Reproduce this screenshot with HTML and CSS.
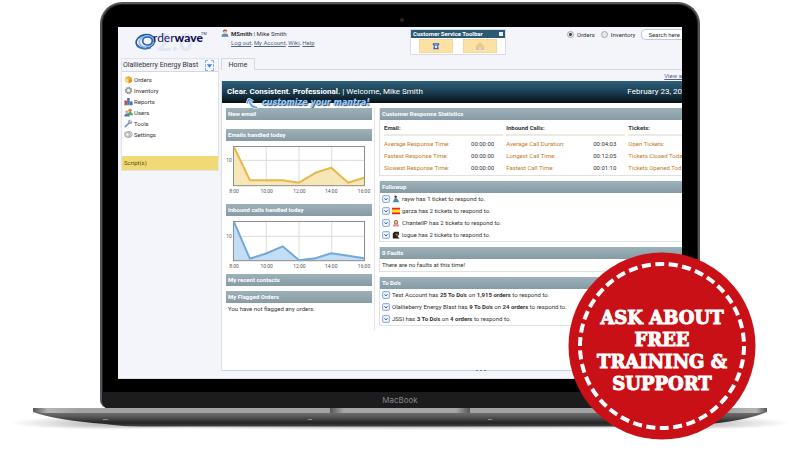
FILE: index.html
```html
<!DOCTYPE html>
<html lang="en">
<head>
<meta charset="utf-8">
<title>Orderwave</title>
<meta name="viewport" content="width=device-width, initial-scale=1">
<link rel="stylesheet" href="styles.css">
</head>
<body>
<svg class="defs" width="0" height="0" aria-hidden="true">
  <symbol id="expand" viewBox="0 0 8 8"><rect x=".7" y=".7" width="6.6" height="6.6" rx=".6" fill="#f4f8ff" stroke="#6f96de" stroke-width=".9"/><path d="M2.4 3.200 L4 5 L5.600 3.200" fill="none" stroke="#3461bd"/></symbol>
  <symbol id="person" viewBox="0 0 10 10"><path d="M1 9.5 Q1 5.8 5 5.8 T9 9.5Z" fill="#4d93cf" stroke="#2e6595" stroke-width=".5"/><circle cx="5" cy="3.6" r="2.5" fill="#f6c48c"/><path d="M2.3 3.8 Q2 .6 5 .6 T7.7 3.8 Q6.5 2 5 2.3 T2.3 3.8Z" fill="#8b4b17"/></symbol>
</svg>
<main class="stage">
  <div class="lid">
    <span class="camera"></span>
    <div class="screen">
      <header class="top">
        <svg class="logo" viewBox="0 0 82 30" role="img" aria-label="Orderwave 2.0">
          <text x="23" y="22" class="logo-version">2.0</text>
          <g fill="none">
            <ellipse cx="11.500" cy="12.500" rx="9.500" ry="6.800" stroke="#2553a0" stroke-width="1.600" transform="rotate(-12 11.500 12.500)"/>
            <ellipse cx="12.500" cy="12.500" rx="7.300" ry="5.400" stroke="#8fb8e4" stroke-width="1.600" transform="rotate(-12 12.500 12.500)"/>
            <ellipse cx="13.500" cy="12" rx="4.800" ry="4" stroke="#2b62b5" stroke-width="1.700"/>
            <path d="M3 15.500 Q8 22 17 18.500" stroke="#3a78c6" stroke-width="1.500"/>
          </g>
          <text x="19" y="13" class="logo-name">rder<tspan class="logo-bold">wave</tspan></text>
          <text x="67" y="6" class="logo-tm">TM</text>
        </svg>
        <div class="user">
          <svg class="icon" aria-hidden="true"><use href="#person"/></svg>
          <div>
            <p><b>MSmith</b> | Mike Smith</p>
            <p class="links"><a href="#">Log out</a>, <a href="#">My Account</a>, <a href="#">Wiki</a>, <a href="#">Help</a></p>
          </div>
        </div>
        <section class="toolbar">
          <h2>Customer Service Toolbar <button class="close" aria-label="Close"></button></h2>
          <div class="tools">
            <button aria-label="Phone"><svg viewBox="0 0 10 10"><path d="M1 1.500 H9 V4 H7.500 L8.500 9 H1.500 L2.500 4 H1Z" fill="#2c62bd"/><path d="M3 2.500 H7 V3.500 H3Z" fill="#9cc2f4"/><circle cx="5" cy="6" r="1.700" fill="#e8f1ff"/></svg></button>
            <button aria-label="Mail"><svg viewBox="0 0 10 10"><path d="M1 4.500 L5 1 L9 4.500 V9 H1Z" fill="#dcd8ca" stroke="#9d9888" stroke-width=".6"/><path d="M2 4.500 L3.500 1.500 H6.500 L8 4.500 L5 6.500Z" fill="#f7cf5c"/><path d="M1 9 L5 5.800 L9 9" fill="#e4e0d4" stroke="#a9a494" stroke-width=".5"/></svg></button>
          </div>
        </section>
        <form class="search">
          <label><input type="radio" name="kind" checked> Orders</label>
          <label><input type="radio" name="kind"> Inventory</label>
          <input class="query" type="text" value="Search here" aria-label="Search">
        </form>
      </header>
      <div class="body">
        <nav class="side">
          <div class="account"><span>Olallieberry Energy Blast</span><button aria-label="Choose account"><svg viewBox="0 0 8 8"><path d="M1 2.500 H7 L4 6.500Z" fill="#3f80d4"/></svg></button></div>
          <ul>
            <li><svg viewBox="0 0 10 10"><path d="M1 3 L5 1 L9 3 V7 L5 9.500 L1 7Z" fill="#f0b038"/><path d="M1 3 L5 5 V9.500 L1 7Z" fill="#fbd784"/><circle cx="7" cy="6.800" r="2" fill="#e0902a"/></svg><a href="#">Orders</a></li>
            <li><svg viewBox="0 0 10 10"><circle cx="5" cy="5" r="3.400" fill="#d5d7da" stroke="#8e9297" stroke-width="1.600" stroke-dasharray="1.600 1"/><circle cx="5" cy="5" r="2.700" fill="none" stroke="#8e9297"/><circle cx="5" cy="5" r="1" fill="#fff"/></svg><a href="#">Inventory</a></li>
            <li><svg viewBox="0 0 10 10"><path d="M.5 4 H3.300 V9 H.5Z" fill="#d1433c"/><path d="M3.500 1 H6.300 V9 H3.500Z" fill="#3c76cf"/><path d="M6.500 5 H9.500 V9 H6.500Z" fill="#4a68b5"/><path d="M0 9 H10" stroke="#8aa" stroke-width=".7"/></svg><a href="#">Reports</a></li>
            <li><svg viewBox="0 0 10 10"><circle cx="6.800" cy="2.600" r="1.900" fill="#c98545"/><path d="M4 8 Q4 4.500 7 4.500 T9.800 8Z" fill="#5ca657"/><circle cx="3.300" cy="4.300" r="1.800" fill="#e8a95c"/><path d="M.3 9.500 Q.3 6 3.300 6 T6.300 9.500Z" fill="#3b7fd0"/></svg><a href="#">Users</a></li>
            <li><svg viewBox="0 0 10 10"><path d="M1.500 8.500 L6 4" stroke="#6a9bd3" stroke-width="2" stroke-linecap="round"/><path d="M8.800 2.500 L7.200 3.500 L6.300 2.700 L7.200 1 Q4.500 .8 4.700 3.500 L6.500 5.300 Q9.300 5.300 8.800 2.500Z" fill="#a4b2c2" stroke="#74869a" stroke-width=".5"/></svg><a href="#">Tools</a></li>
            <li><svg viewBox="0 0 10 10"><circle cx="6" cy="5" r="3.200" fill="#e6e7e9" stroke="#a8abb0"/><circle cx="3.800" cy="5" r="3.100" fill="#d0d3d6" stroke="#999da2"/><circle cx="3.800" cy="5" r="1" fill="#fff"/></svg><a href="#">Settings</a></li>
          </ul>
          <a class="scripts" href="#">Script(s)</a>
        </nav>
        <div class="main">
          <div class="tabs"><button>Home</button></div>
          <a class="view" href="#">View a</a>
          <div class="page">
            <div class="banner">
              <p><b>Clear. Consistent. Professional.</b> | Welcome, Mike Smith</p>
              <time>February 23, 20</time>
              <span class="hint"><svg viewBox="0 0 12 11" aria-hidden="true"><path d="M11 9.500 Q5 9 3.500 4 M.8 5.500 L3 1.200 L7 3.800" fill="none" stroke="#d8ecff" stroke-width="3"/><path d="M11 9.500 Q5 9 3.500 4 M.8 5.500 L3 1.200 L7 3.800" fill="none" stroke="#4c97d9" stroke-width="1.300"/></svg>customize your mantra!</span>
            </div>
            <div class="columns">
              <div class="left">
                <section class="card"><h3>New email</h3></section>
                <section class="card charted"><h3>Emails handled today</h3>
                  <svg class="chart" viewBox="0 0 147 56" role="img" aria-label="Emails handled today">
                    <path class="grid" d="M8 19.500 H139 M40.500 5 V45 M73.500 5 V45 M106.500 5 V45"/>
                    <path d="M8 6 L24 39.500 H57 L73.500 42 L90 32 L106 27 L123 42 L139 37 V45 H8Z" fill="#f6e3b0" fill-opacity=".9"/>
                    <rect class="frame" x="7.500" y="5.500" width="132" height="39.500"/>
                    <path class="line mail" d="M8 6 L24 39.500 H57 L73.500 42 L90 32 L106 27 L123 42 L139 37"/>
                    <text x="3" y="21">10</text>
                    <text x="8" y="52">8:00</text><text x="41" y="52">10:00</text><text x="74" y="52">12:00</text><text x="106" y="52">14:00</text><text x="139" y="52">16:00</text>
                  </svg>
                </section>
                <section class="card"><h3>Inbound calls handled today</h3>
                  <svg class="chart" viewBox="0 0 147 56" role="img" aria-label="Inbound calls handled today">
                    <path class="grid" d="M8 20.500 H139 M40.500 5 V45 M73.500 5 V45 M106.500 5 V45"/>
                    <path d="M8 6 L24 43 L41 37.500 L57 30.500 L73.500 44.500 L90 42.500 L106 37.500 L123 40 L139 42.500 V45 H8Z" fill="#bddaf3" fill-opacity=".9"/>
                    <rect class="frame" x="7.500" y="5.500" width="132" height="39.500"/>
                    <path class="line calls" d="M8 6 L24 43 L41 37.500 L57 30.500 L73.500 44.500 L90 42.500 L106 37.500 L123 40 L139 42.500"/>
                    <text x="3" y="22">10</text>
                    <text x="8" y="52">8:00</text><text x="41" y="52">10:00</text><text x="74" y="52">12:00</text><text x="106" y="52">14:00</text><text x="139" y="52">16:00</text>
                  </svg>
                </section>
                <section class="card"><h3>My recent contacts</h3></section>
                <section class="card"><h3>My Flagged Orders</h3><p>You have not flagged any orders.</p></section>
              </div>
              <div class="right">
                <section class="panel"><h3>Customer Response Statistics</h3>
                  <div class="stats">
                    <table><thead><tr><th colspan="2">Email:</th></tr></thead><tbody><tr><td>Average Response Time:</td><td>00:00:00</td></tr><tr><td>Fastest Response Time:</td><td>00:00:00</td></tr><tr><td>Slowest Response Time:</td><td>00:00:00</td></tr></tbody></table>
                    <table><thead><tr><th colspan="2">Inbound Calls:</th></tr></thead><tbody><tr><td>Average Call Duration:</td><td>00:04:03</td></tr><tr><td>Longest Call Time:</td><td>00:12:05</td></tr><tr><td>Fastest Call Time:</td><td>00:01:10</td></tr></tbody></table>
                    <table><thead><tr><th>Tickets:</th></tr></thead><tbody><tr><td>Open Tickets:</td></tr><tr><td>Tickets Closed Toda</td></tr><tr><td>Tickets Opened Tod</td></tr></tbody></table>
                  </div>
                </section>
                <section class="panel"><h3>Followup</h3>
                  <ul class="rows">
                    <li><svg><use href="#expand"/></svg><svg viewBox="0 0 10 10"><path d="M0 9 Q5 6 10 9Z" fill="#4285c9"/><path d="M1 8.500 L4.500 2 L9 8Z" fill="#4f86bd"/><circle cx="4.500" cy="2" r="1.500" fill="#4a3b3a"/></svg><span>rayw has 1 ticket to respond to.</span></li>
                    <li><svg><use href="#expand"/></svg><svg viewBox="0 0 10 10"><path d="M0 1 H10 V9 H0Z" fill="#e3222b"/><path d="M0 3 H10 V7 H0Z" fill="#ffe21e"/></svg><span>garza has 2 tickets to respond to.</span></li>
                    <li><svg><use href="#expand"/></svg><svg viewBox="0 0 10 10"><path d="M2.500 6 V3 Q5 -1 7.500 3 V6Z" fill="#84402a"/><circle cx="5" cy="3.800" r="1.900" fill="#f1bf95"/><path d="M1 9.500 Q1 6 5 6 T9 9.500Z" fill="#e99096"/></svg><span>ChantellP has 2 tickets to respond to.</span></li>
                    <li><svg><use href="#expand"/></svg><svg viewBox="0 0 10 10"><path d="M1 9.500 V3 L3 1 H8.500 L9 4 L7 7 L9.500 9.500Z" fill="#24211f"/><path d="M4 3.500 H8 L7 5.500 H5Z" fill="#a5774c"/></svg><span>logue has 2 tickets to respond to.</span></li>
                  </ul>
                </section>
                <section class="panel"><h3>0 Faults</h3><p>There are no faults at this time!</p></section>
                <section class="panel"><h3>To Do's</h3>
                  <ul class="rows">
                    <li><svg><use href="#expand"/></svg><span>Test Account has <b>25 To Do's</b> on <b>1,915 orders</b> to respond to.</span></li>
                    <li><svg><use href="#expand"/></svg><span>Olallieberry Energy Blast has <b>9 To Do's</b> on <b>24 orders</b> to respond to.</span></li>
                    <li><svg><use href="#expand"/></svg><span>JSSI has <b>3 To Do's</b> on <b>4 orders</b> to respond to.</span></li>
                  </ul>
                </section>
              </div>
            </div>
          </div>
          <div class="grip"><i></i><i></i><i></i></div>
        </div>
      </div>
    </div>
    <div class="chin">MacBook</div>
  </div>
  <svg class="base" viewBox="0 0 800 32" aria-hidden="true">
    <defs>
      <linearGradient id="deck" x1="0" x2="1"><stop offset="0" stop-color="#555"/><stop offset=".02" stop-color="#b5b5b5"/><stop offset=".06" stop-color="#a2a2a2"/><stop offset=".94" stop-color="#a2a2a2"/><stop offset=".985" stop-color="#b5b5b5"/><stop offset="1" stop-color="#555"/></linearGradient>
      <linearGradient id="under" x1="0" x2="0" y1="0" y2="1"><stop offset="0" stop-color="#878787"/><stop offset=".45" stop-color="#5a5a5a"/><stop offset=".8" stop-color="#242424"/><stop offset="1" stop-color="#444"/></linearGradient>
      <linearGradient id="notch" x1="0" x2="1"><stop offset="0" stop-color="#555"/><stop offset=".1" stop-color="#a6a6a6"/><stop offset=".9" stop-color="#a6a6a6"/><stop offset="1" stop-color="#555"/></linearGradient>
      <radialGradient id="shade"><stop offset="0" stop-color="#000" stop-opacity=".3"/><stop offset="1" stop-color="#000" stop-opacity="0"/></radialGradient>
    </defs>
    <ellipse cx="110" cy="15" rx="100" ry="7" fill="url(#shade)"/>
    <ellipse cx="690" cy="15" rx="100" ry="7" fill="url(#shade)"/>
    <ellipse cx="400" cy="18" rx="370" ry="4" fill="url(#shade)"/>
    <path d="M33 0 H767 V4 Q740 15 680 18 Q670 18.500 650 18.500 H150 Q120 18.500 105 16 Q55 12 33 4Z" fill="url(#under)"/>
    <path d="M33 0 H767 V3 L760 5 H40 L33 3Z" fill="url(#deck)"/>
    <path d="M330 0 H470 V5 H330Z" fill="url(#notch)"/>
    <path d="M103 11.500 H108 M308 11.500 H312 M488 11.500 H492" stroke="#8a8a8a"/>
  </svg>
  <aside class="badge">
    <svg viewBox="0 0 188 188" aria-hidden="true"><circle cx="94" cy="94" r="93.500" fill="#c81016"/><circle cx="94" cy="94" r="82" fill="none" stroke="#fff" stroke-width="4" pathLength="114" stroke-dasharray="2 1"/></svg>
    <p>ASK ABOUT<br>FREE<br>TRAINING &amp;<br>SUPPORT</p>
  </aside>
</main>
</body>
</html>
```
FILE: styles.css
```css
* { box-sizing: border-box; margin: 0; padding: 0; }
body { background: #fff; color: #333; font: 6px/12px Roboto, "Noto Sans", sans-serif; }
a { color: inherit; }
ul { list-style: none; }
button, input { font: inherit; color: inherit; }
button { border: 0; background: none; }
.defs { position: absolute; }
.stage { position: relative; padding-top: 2px; overflow: hidden; }

.lid { width: 75%; margin: 0 auto; padding: 23px 16px 0; background: #000; border: 2px solid #55575a; border-bottom: 0; border-radius: 22px 22px 8px 8px; box-shadow: inset 0 0 0 1px #1d1d1f; position: relative; overflow: hidden; }
.camera { position: absolute; top: 14px; left: 50%; width: 4px; height: 4px; border-radius: 50%; background: #242528; }
.screen { height: 352px; overflow: hidden; background: #f4f5fa; border-bottom: 1px solid #ddd; }
.chin { margin: 13px -16px 0; height: 16px; background: #1c1c1e; color: #858588; text-align: center; font: 8px/16px Inter, sans-serif; }
.base { display: block; width: 100%; }

.top { display: flex; align-items: flex-start; height: 31px; line-height: 9px; padding-top: 2px; }
.logo { width: 82px; height: 30px; margin-left: 16px; flex: none; overflow: visible; }
.logo text { font-family: "Open Sans", sans-serif; }
.logo .logo-version { font-size: 25px; font-weight: 700; fill: #e2e7f2; }
.logo .logo-name { font-family: Lato, sans-serif; font-size: 12px; fill: #222064; }
.logo .logo-bold { font-weight: 900; fill: #140c58; }
.logo .logo-tm { font-size: 4px; fill: #222064; }
.user { display: flex; gap: 2px; width: 189px; margin-left: 5px; flex: none; }
.icon { width: 8px; height: 8px; flex: none; }
.links { color: #53647e; }
.toolbar { width: 96px; flex: none; border: 1px solid #d8dbe2; background: #fff; }
.toolbar h2 { display: flex; justify-content: space-between; align-items: center; padding: 0 2px; background: #2b5a74; color: #fff; font-size: 6px; line-height: 8px; }
.close { width: 4px; height: 4px; background: #e8f0f4; }
.tools { display: flex; justify-content: space-between; padding: 1px 8px; }
.tools button { width: 34px; height: 14px; background: #fde0a4; border: 1px solid #f6d69a; display: flex; align-items: center; justify-content: center; }
.tools svg { width: 8px; height: 8px; }
.search { display: flex; align-items: center; gap: 6px; flex: 1; margin-left: 61px; }
.search label { display: flex; align-items: center; gap: 3px; }
.search [type=radio] { appearance: none; width: 7px; height: 7px; border: 1px solid #a4a7ac; border-radius: 50%; background: #e6e7ea; }
.search [type=radio]:checked { background: radial-gradient(circle, #444 0 1px, #e6e7ea 2px); }
.query { flex: 1; min-width: 0; height: 11px; padding-left: 6px; background: #fff; border: 1px solid #bccbdc; border-right: 0; border-radius: 5px 0 0 5px; }

.body { display: grid; grid-template-columns: 98px 1fr; gap: 2px; padding-left: 3px; align-items: start; }
.side { border: 1px solid #e2e4ea; background: #fff; }
.account { display: flex; justify-content: space-between; align-items: center; height: 13px; padding: 0 4px 0 1px; background: #f4f5fa; border-bottom: 1px solid #d5d8df; font-size: 7px; white-space: nowrap; }
.account button { width: 9px; height: 11px; border: 1px dashed #8db4e4; display: flex; align-items: center; }
.account svg { width: 7px; height: 7px; }
.side ul { padding: 2px 2px 16px; }
.side li { display: flex; align-items: center; gap: 1px; height: 11px; }
.side li svg { width: 9px; height: 9px; }
.side a { text-decoration: none; }
.scripts { display: block; height: 14px; padding-left: 2px; background: #f1da75; line-height: 14px; color: #5c4b16; }

.main { min-width: 0; }
.tabs { height: 12px; border-bottom: 1px solid #d5d8df; }
.tabs button { width: 34px; height: 12px; font-size: 7px; line-height: 13px; background: #f4f5fa; border: 1px solid #d5d8df; border-bottom: 0; }
.view { display: block; text-align: right; height: 11px; color: #53647e; }
.page { background: #fff; border-left: 1px solid #dcdfe5; border-bottom: 1px solid #c5d0e0; }
.banner { position: relative; display: flex; justify-content: space-between; height: 22px; padding-left: 5px; background: linear-gradient(#2f617c, #1c4256 45%, #081116); color: #fff; font-size: 8px; line-height: 22px; white-space: nowrap; }
.hint { position: absolute; left: 24px; top: 16px; display: flex; gap: 4px; align-items: center; font: italic 700 8px/12px "DejaVu Sans", sans-serif; color: #9bd0fa; text-shadow: 0 0 1px #0c4f94, 1px 1px 1px #345; }
.hint svg { width: 12px; height: 11px; }
.columns { display: grid; grid-template-columns: 149px 1fr; gap: 4px; padding: 5px 0 0 4px; height: 267px; }
.left { display: flex; flex-direction: column; gap: 5px; padding-right: 2px; border-right: 1px solid #e3e5e8; height: 222px; }
.left .charted { margin: 4px 0 2px; }
.left .card:nth-child(4) { margin-top: -2px; }
h3 { height: 12px; padding-left: 2px; background: linear-gradient(#9db1ba, #879ba5); color: #fff; font-size: 6px; line-height: 12px; font-weight: 700; }
.card p, .panel p { padding-left: 2px; }
.chart { display: block; width: 100%; }
.chart text { font-size: 5px; fill: #555; text-anchor: middle; }
.grid { stroke: #dcdcdc; }
.frame { fill: none; stroke: #8b8b8b; }
.line { fill: none; stroke-width: 2; stroke-linejoin: round; }
.mail { stroke: #e6b84a; }
.calls { stroke: #73a9d8; }
.right { display: flex; flex-direction: column; gap: 5px; min-width: 0; }
.panel { overflow: hidden; border: 1px solid #dfe2e4; border-width: 0 0 1px 1px; white-space: nowrap; }
.stats { display: grid; grid-template-columns: 41% 41% 41%; padding: 2px 0 1px 4px; }
.stats table { width: calc(100% - 3px); border-collapse: collapse; align-self: start; }
.stats th { text-align: left; height: 13px; border-bottom: 2px solid #efe9df; }
.stats tbody tr:first-child td { padding-top: 2px; }
.stats td { color: #bf7b28; }
.stats td + td { color: #333; text-align: right; padding-right: 9px; }
.rows { padding-left: 2px; }
.rows li { display: flex; align-items: center; gap: 2px; height: 12px; }
.rows svg { width: 8px; height: 8px; flex: none; }
.grip { display: flex; gap: 2px; justify-content: center; margin: -1px 0 0 58px; }
.grip i { width: 2px; height: 1px; background: #7587ae; }

.badge { position: absolute; left: 71%; top: 252px; width: 188px; height: 188px; display: grid; align-items: center; }
.badge svg, .badge p { grid-area: 1 / 1; }
.badge p { padding-top: 10px; text-align: center; color: #fff; font: 700 18px/22px "DejaVu Serif", serif; -webkit-text-stroke: 1px #fff; }
```
